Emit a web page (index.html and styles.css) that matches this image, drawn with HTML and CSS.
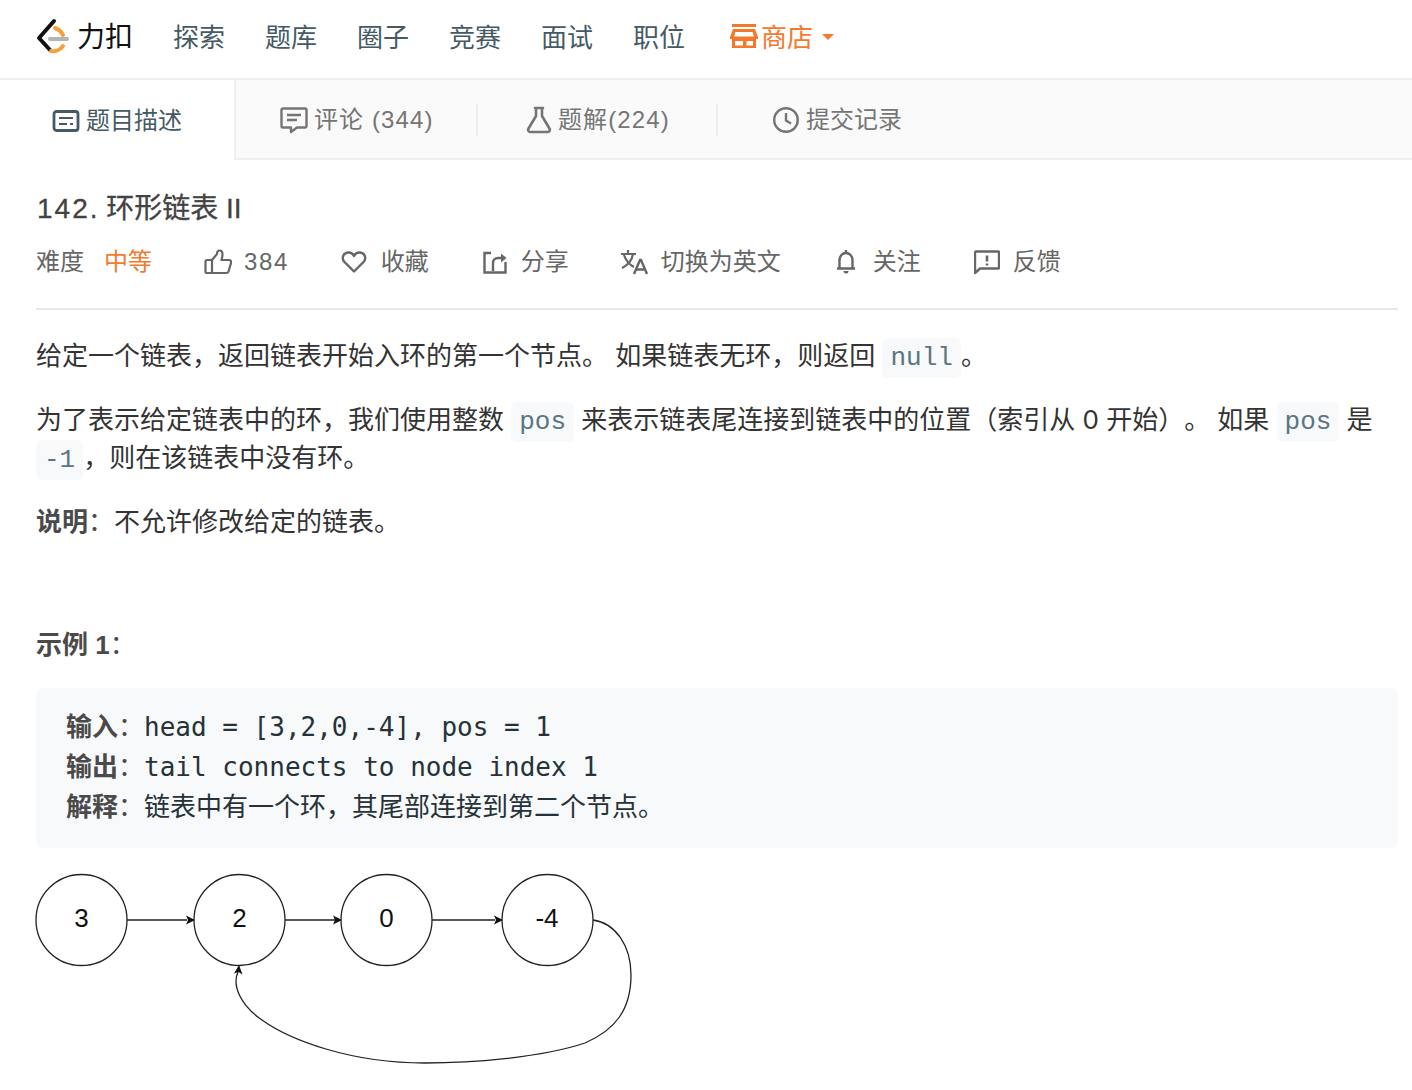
FILE: index.html
```html
<!DOCTYPE html>
<html lang="zh">
<head>
<meta charset="utf-8">
<title>142. 环形链表 II</title>
<link rel="stylesheet" href="styles.css">
</head>
<body>
<header class="topbar">
  <a class="logo">
    <svg class="logo-mark" width="34" height="40" viewBox="0 0 34 40">
      <path d="M19 3 4 20l11 12" fill="none" stroke="#111" stroke-width="4" stroke-linecap="round" stroke-linejoin="round"/>
      <path d="M20 10c3 1 6 3 8 7M16 33c4 1 9-1 12-5" fill="none" stroke="#f5a23b" stroke-width="4" stroke-linecap="round"/>
      <path d="M15 21h17" stroke="#b4b4b4" stroke-width="4" stroke-linecap="round"/>
    </svg>
    <span class="logo-text">力扣</span>
  </a>
  <nav class="nav">
    <a>探索</a><a>题库</a><a>圈子</a><a>竞赛</a><a>面试</a><a>职位</a>
    <a class="shop">
      <svg width="28" height="24" viewBox="0 0 28 24"><path fill="#f4792d" fill-rule="evenodd" d="M2 0h24v3H2zM3 5h22l3 8v2h-2v9H2v-9H0v-2zM5.500 8 4 12.500h20L22.500 8zM5 17v4.500h8V17zM16.500 17v4.500H23V17z"/></svg>
      <span>商店</span><i class="caret"></i>
    </a>
  </nav>
</header>

<div class="tabs">
  <div class="tab tab-active">
    <svg width="28" height="24" viewBox="0 0 28 24"><rect x="2" y="2.500" width="24" height="19" rx="2.500" fill="none" stroke="#455a64" stroke-width="2.800"/><path d="M7 9h14M7 15h8M18 15h3" stroke="#455a64" stroke-width="2.200"/></svg>
    <span>题目描述</span>
  </div>
  <div class="tab tab-comment">
    <svg width="28" height="28" viewBox="0 0 28 28"><path d="M3 2.500h22a1.500 1.500 0 0 1 1.500 1.500v16a1.500 1.500 0 0 1-1.500 1.500h-8L11 26v-4.500H3A1.500 1.500 0 0 1 1.500 20V4A1.500 1.500 0 0 1 3 2.500z" fill="none" stroke="#757575" stroke-width="2.400" stroke-linejoin="round"/><path d="M7 9h14M7 14h10" stroke="#757575" stroke-width="2.400"/></svg>
    <span>评论 (344)</span>
  </div>
  <div class="tab tab-solution">
    <svg width="26" height="28" viewBox="0 0 26 28"><path d="M9 2h8M10 2v8L2.500 22.500A2.200 2.200 0 0 0 4.500 26h17a2.200 2.200 0 0 0 2-3.500L16 10V2" fill="none" stroke="#757575" stroke-width="2.600" stroke-linecap="round" stroke-linejoin="round"/></svg>
    <span>题解(224)</span>
  </div>
  <div class="tab tab-record">
    <svg width="28" height="28" viewBox="0 0 28 28"><circle cx="14" cy="14" r="11.800" fill="none" stroke="#757575" stroke-width="2.400"/><path d="M14 7v7.500l5 3" fill="none" stroke="#757575" stroke-width="2.400"/></svg>
    <span>提交记录</span>
  </div>
  <div class="tab-fill"></div>
</div>

<main class="content">
  <h1 class="title"><span class="title-num">142.</span> 环形链表 II</h1>
  <div class="meta">
    <span class="meta-diff">难度</span>
    <span class="meta-level">中等</span>
    <span class="meta-item meta-like">
      <svg width="28" height="26" viewBox="0 0 28 26"><path d="M8 11v13H3a1.500 1.500 0 0 1-1.500-1.500v-10A1.500 1.500 0 0 1 3 11zM8 11l5-6c0-2 1-3.500 2.500-3.500 2 0 3 2 3 4 0 2-.5 3.500-1 5.500h7.500c1.500 0 2.500 1.300 2 3l-2.500 8.500c-.3 1-1 1.500-2 1.500H8" fill="none" stroke="#666" stroke-width="2.200" stroke-linejoin="round"/></svg>
      <span class="spaced">384</span>
    </span>
    <span class="meta-item meta-fav">
      <svg width="26" height="24" viewBox="0 0 26 24"><path d="M13 21.500 3.500 12C.5 9 1.500 3 7 2.500c3-.2 5 1.500 6 3.500 1-2 3-3.700 6-3.500 5.500.5 6.500 6.500 3.500 9.500z" fill="none" stroke="#666" stroke-width="2.400" stroke-linejoin="round"/></svg>
      <span>收藏</span>
    </span>
    <span class="meta-item meta-share">
      <svg width="26" height="24" viewBox="0 0 26 24"><path d="M9 3H2.500v19.500h21V12M11 21v-8a5 5 0 0 1 5-5h7" fill="none" stroke="#666" stroke-width="2.400"/><path d="M19 3.500 24.500 8 19 12.500z" fill="#666"/></svg>
      <span>分享</span>
    </span>
    <span class="meta-item meta-lang">
      <svg width="28" height="26" viewBox="0 0 28 26"><path d="M1 5h15M8 1v4M13 5c-1 6-5 11-11 14M4 6c2 6 6 10 10 12" fill="none" stroke="#666" stroke-width="2.200"/><path d="m14 25 6-14h1l6 14M16.500 20.500h8" fill="none" stroke="#666" stroke-width="2.400"/></svg>
      <span>切换为英文</span>
    </span>
    <span class="meta-item meta-bell">
      <svg width="22" height="26" viewBox="0 0 22 26"><path d="M2 19.500h18M4.500 19V11c0-4 3-7 6.500-7s6.500 3 6.500 7v8M11 1v3" fill="none" stroke="#666" stroke-width="2.400"/><path d="M8.500 22h5a2.500 2.500 0 0 1-5 0z" fill="#666"/></svg>
      <span>关注</span>
    </span>
    <span class="meta-item meta-feedback">
      <svg width="26" height="26" viewBox="0 0 26 26"><path d="M2 2.500h22a1 1 0 0 1 1 1v15a1 1 0 0 1-1 1H6L1 24V3.500a1 1 0 0 1 1-1z" fill="none" stroke="#666" stroke-width="2.400" stroke-linejoin="round"/><path d="M13 6.500v6M13 14.500v2" stroke="#666" stroke-width="2.600"/></svg>
      <span>反馈</span>
    </span>
  </div>

  <section class="desc">
    <p>给定一个链表，返回链表开始入环的第一个节点。 如果链表无环，则返回 <code>null</code>。</p>
    <p>为了表示给定链表中的环，我们使用整数 <code>pos</code> 来表示链表尾连接到链表中的位置（索引从 <span class="zero">0</span> 开始）。 如果 <code>pos</code> 是 <code>-1</code>，则在该链表中没有环。</p>
    <p><strong>说明<span class="colon">：</span></strong>不允许修改给定的链表。</p>
    <p class="example-head"><strong>示例 1<span class="colon">：</span></strong></p>
    <pre class="example"><strong>输入<span class="colon">：</span></strong>head = [3,2,0,-4], pos = 1
<strong>输出<span class="colon">：</span></strong>tail connects to node index 1
<strong>解释<span class="colon">：</span></strong>链表中有一个环，其尾部连接到第二个节点。</pre>
    <svg class="diagram" width="642" height="200" viewBox="34 870 642 200">
      <g fill="none" stroke="#222" stroke-width="1.300">
        <circle cx="81.500" cy="920" r="45.500"/>
        <circle cx="239.500" cy="920" r="45.500"/>
        <circle cx="386.500" cy="920" r="45.500"/>
        <circle cx="547.500" cy="920" r="45.500"/>
        <path d="M127 920h60M285 920h50M432 920h63"/>
        <path d="M593 920C615 923 631 945 631 975 631 1010 615 1030 585 1043 540 1058 470 1063 425 1063 350 1063 290 1040 262 1020 240 1005 232 985 238 972"/>
      </g>
      <g fill="#111">
        <path d="m195 920-9 4.500 2-4.500-2-4.500zM342 920l-9 4.500 2-4.500-2-4.500zM503 920l-9 4.500 2-4.500-2-4.500zM239 965l3.500 9.500-4-2.500-4.500 1.500z"/>
      </g>
      <g class="diagram-text" text-anchor="middle">
        <text x="81.500" y="927">3</text>
        <text x="239.500" y="927">2</text>
        <text x="386.500" y="927">0</text>
        <text x="547" y="927">-4</text>
      </g>
    </svg>
  </section>
</main>
</body>
</html>
```
FILE: styles.css
```css
* { box-sizing: border-box; }
html, body { margin: 0; padding: 0; }
body {
  background: #fff;
  color: #333;
  font-family: "Liberation Sans", "Noto Sans CJK SC", sans-serif;
  font-size: 26px;
  overflow: hidden;
  text-spacing-trim: space-all;
}
.topbar {
  height: 80px;
  border-bottom: 2px solid #eee;
  display: flex;
  align-items: center;
  padding: 0 0 2px 35px;
}
.logo { display: flex; align-items: center; width: 138px; }
.logo-mark { flex: none; }
.logo-text { font-size: 28px; color: #111; margin-left: 8px; line-height: 40px; font-weight: 400; }
.nav { display: flex; align-items: center; gap: 40px; color: #455a64; line-height: 36px; }
.shop { display: flex; align-items: center; color: #f4792d; margin-left: 5px; }
.shop svg { margin-right: 3px; margin-bottom: 4px; }
.caret {
  width: 0; height: 0; margin: 0 0 2px 9px;
  border-left: 6px solid transparent;
  border-right: 6px solid transparent;
  border-top: 6px solid #f4792d;
}
.tabs { display: flex; height: 80px; font-size: 24px; line-height: 32px; color: #757575; }
.tab {
  display: flex; align-items: center; position: relative;
  background: #fafafa; border-bottom: 2px solid #eee; padding-top: 2px;
  letter-spacing: 1.100px;
}
.tab span { margin-left: 6px; }
.tab-active {
  width: 236px; padding-left: 52px;
  background: #fff; color: #455a64; border-bottom: 0; border-right: 2px solid #eee;
  letter-spacing: 0;
}
.tab-comment { width: 242px; padding-left: 44px; }
.tab-solution { width: 240px; padding-left: 48px; }
.tab-record { padding-left: 54px; width: 300px; letter-spacing: 0; }
.tab-comment::after, .tab-solution::after {
  content: ""; position: absolute; right: 0; top: 24px; width: 2px; height: 32px; background: #eee;
}
.tab-fill { flex: 1; background: #fafafa; border-bottom: 2px solid #eee; }
.content { padding: 0 14px 0 36px; }
.title {
  margin: 0; padding-top: 30px; font-size: 28px; line-height: 38px; font-weight: 400;
  color: #424242; -webkit-text-stroke: 0.3px #424242;
}
.title-num { letter-spacing: 2px; margin-right: -1px; margin-left: 1px; }
.meta {
  display: flex; align-items: center; height: 82px;
  border-bottom: 2px solid #e8e8e8; font-size: 24px; line-height: 32px; color: #666;
  padding-bottom: 12px;
}
.meta-level { color: #ef7a30; margin-left: 20px; }
.meta-item { display: flex; align-items: center; gap: 12px; }
.meta-like { margin-left: 52px; }
.spaced { letter-spacing: 1.600px; }
.meta-fav { margin-left: 52px; gap: 14px; }
.meta-share { margin-left: 53px; gap: 13px; }
.meta-lang { margin-left: 51px; gap: 13px; }
.meta-bell { margin-left: 54px; gap: 16px; }
.meta-feedback { margin-left: 53px; gap: 13px; }
.desc { padding-top: 27px; color: #333; }
.desc p { margin: 0 0 26px; line-height: 38px; }
.desc strong { font-weight: 700; color: #4a4a4a; }
.colon { font-family: "Noto Sans CJK TC", sans-serif; font-weight: 400; line-height: 0; }
.zero { font-family: Inter, sans-serif; line-height: 0; }
.desc code {
  font-family: "Liberation Mono", monospace;
  font-size: 26px; line-height: 1; color: #5b7583; background: #f7f9fa;
  border-radius: 6px; padding: 5px 8px;
}
.desc .example-head { margin: 85px 0 24px; }
.example {
  margin: 0; height: 160px; padding: 19px 30px 0;
  background: #f7f9fa; border-radius: 8px;
  font-family: "DejaVu Sans Mono", "Noto Sans CJK SC", monospace;
  font-size: 26px; line-height: 40px; color: #263238;
}
.diagram { display: block; margin: 22px 0 0 -2px; }
.diagram-text { font-family: "Liberation Sans", sans-serif; font-size: 26px; fill: #111; }
```
